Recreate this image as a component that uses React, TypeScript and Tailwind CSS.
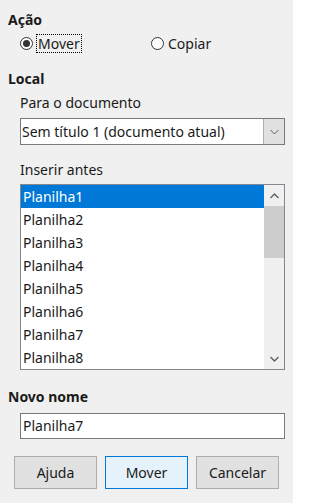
import React from "react";

const sheets = ["Planilha1", "Planilha2", "Planilha3", "Planilha4", "Planilha5", "Planilha6", "Planilha7", "Planilha8"];

function Radio({ checked }: { checked?: boolean }) {
  return (
    <span className="flex h-[13px] w-[13px] items-center justify-center rounded-full border border-[#333] bg-white">
      {checked && <span className="h-[7px] w-[7px] rounded-full bg-[#333]" />}
    </span>
  );
}

function Chevron({ up, thin }: { up?: boolean; thin?: boolean }) {
  return (
    <svg width="9" height="6" viewBox="0 0 9 6" fill="none">
      <path
        d={up ? "M0.5 5L4.5 1L8.5 5" : "M0.5 1L4.5 5L8.5 1"}
        stroke="#606060"
        strokeWidth={thin ? "1" : "1.4"}
      />
    </svg>
  );
}

export default function App() {
  return (
    <div className="flex h-[503px] w-[293px] flex-col bg-[#f0f0f0] pl-2 pt-[10px] text-[14px] leading-[19px] text-[#1a1a1a] [font-family:'Noto_Sans',sans-serif]">
      <p className="font-bold">Ação</p>
      <div className="mt-[5px] flex h-[19px] items-center pl-3">
        <div className="flex w-[131px] items-center">
          <Radio checked />
          <span className="ml-[3px] border border-dotted border-black px-[1px] leading-[17px]">Mover</span>
        </div>
        <div className="flex items-center">
          <Radio />
          <span className="ml-[4px]">Copiar</span>
        </div>
      </div>
      <p className="mt-[16px] font-bold">Local</p>
      <p className="mt-[5px] pl-3">Para o documento</p>
      <div className="ml-3 mt-[6px] flex h-[27px] w-[265px] border border-[#7a7a7a] bg-white">
        <span className="flex-1 pl-[1px] leading-[25px]">Sem título 1 (documento atual)</span>
        <span className="flex w-[21px] items-center justify-center border-l border-[#adadad] bg-[#e1e1e1]">
          <Chevron thin />
        </span>
      </div>
      <p className="mt-[15px] pl-3">Inserir antes</p>
      <div className="ml-3 mt-[5px] flex h-[186px] w-[265px] border border-[#828790] bg-white">
        <ul className="flex-1">
          {sheets.map((s, i) => (
            <li
              key={s}
              className={
                i === 0
                  ? "h-[23px] bg-[#0078d7] pl-[2px] leading-[23px] text-white"
                  : "h-[23px] pl-[2px] leading-[23px]"
              }
            >
              {s}
            </li>
          ))}
        </ul>
        <div className="flex w-[20px] flex-col bg-[#f0f0f0]">
          <span className="flex h-[21px] items-center justify-center">
            <Chevron up />
          </span>
          <span className="h-[52px] bg-[#cdcdcd]" />
          <span className="flex-1" />
          <span className="flex h-[21px] items-center justify-center">
            <Chevron />
          </span>
        </div>
      </div>
      <p className="mt-[17px] font-bold">Novo nome</p>
      <div className="ml-3 mt-[7px] h-[26px] w-[265px] border border-[#7a7a7a] bg-white pl-[2px] leading-[24px]">Planilha7</div>
      <div className="ml-[6px] mt-[17px] flex gap-2">
        <button className="h-[33px] w-[83px] border border-[#adadad] bg-[#e1e1e1]">Ajuda</button>
        <button className="h-[33px] w-[83px] border border-[#0078d7] bg-[#e5f1fb]">Mover</button>
        <button className="h-[33px] w-[83px] border border-[#adadad] bg-[#e1e1e1]">Cancelar</button>
      </div>
    </div>
  );
}
